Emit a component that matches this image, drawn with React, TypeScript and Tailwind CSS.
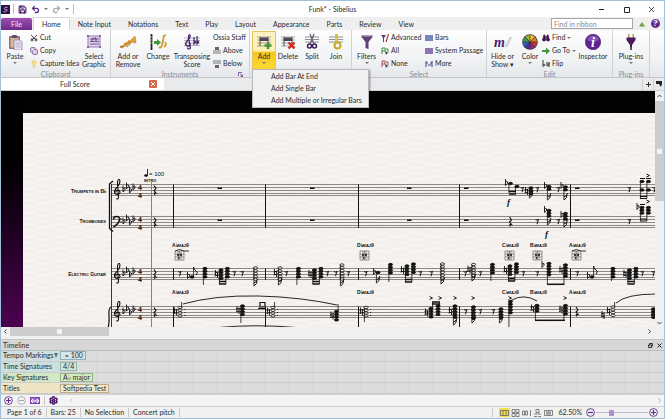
import React from 'react';
import {
  Scissors, Copy, Lightbulb, Save, Undo2, Redo2, Binoculars, Settings,
} from 'lucide-react';

const tabs = ['Home', 'Note Input', 'Notations', 'Text', 'Play', 'Layout', 'Appearance', 'Parts', 'Review', 'View'];

const Caret = () => (
  <svg className="w-1 h-1 shrink-0" viewBox="0 0 4 4"><path d="M0 1h4L2 3z" fill="#777" /></svg>
);

/* ---------- ribbon pieces ---------- */

interface BigProps {
  label: string;
  icon: React.ReactNode;
  width: string;
  menu?: boolean;
  active?: boolean;
}

const BigButton: React.FC<BigProps> = ({ label, icon, width, menu, active }) => (
  <button className={`${width} h-[39px] shrink-0 flex flex-col items-center leading-[8px] ${active ? 'border border-[#e3c35a] bg-[linear-gradient(#fdf3c4_0,#fdf0b0_52%,#f7c51a_54%,#fcd935_100%)]' : 'border border-transparent'}`}>
    <span className="h-[19px] flex items-center justify-center">{icon}</span>
    <span className="text-center pt-px">{label}</span>
    {menu && <span className="h-[6px] flex items-center"><Caret /></span>}
  </button>
);

const SmallButton: React.FC<{ label: string; icon?: React.ReactNode; menu?: boolean }> = ({ label, icon, menu }) => (
  <button className="h-[13px] flex items-center gap-[2px] whitespace-nowrap">
    {icon && <span className="w-[8px] flex justify-center">{icon}</span>}
    <span>{label}</span>
    {menu && <Caret />}
  </button>
);

const Group: React.FC<{ name: string; width: string; children: React.ReactNode; launcher?: boolean; covered?: boolean }> = ({ name, width, children, launcher, covered }) => (
  <section aria-label={name} className={`${width} shrink-0 flex flex-col border-r border-[#cfd1d5]`}>
    <div className="flex pt-px">{children}</div>
    <div className="relative h-[8px] leading-[8px] text-center text-[#8a8a8e]">
      {!covered && name}
      {launcher && (
        <svg className="absolute right-[6px] top-[2px] w-[5px] h-[5px]" viewBox="0 0 5 5" fill="none" stroke="#6b3a8c">
          <path d="M.5 4V.5H4M2 2l2.5 2.5M4.500 2.500v2H2.500" strokeWidth=".8" />
        </svg>
      )}
    </div>
  </section>
);

/* ---------- icons ---------- */

const StaffLines = ({ y = 4 }: { y?: number }) => (
  <path d={`M1 ${y}h14M1 ${y + 2.5}h14M1 ${y + 5}h14`} stroke="#777" strokeWidth=".8" />
);

const PasteIcon = () => (
  <svg className="w-4 h-4" viewBox="0 0 16 16">
    <rect x="2" y="2" width="11" height="13" rx="1" fill="#8d6f86" />
    <rect x="3.500" y="4" width="8" height="9.500" fill="#d9b98c" />
    <rect x="5" y="1" width="5" height="3" rx="1" fill="#5c4a66" />
    <path d="M7 6h6l2 2v8H7z" fill="#e9e2f1" stroke="#8a76a0" strokeWidth=".7" />
    <path d="M8.500 9h5M8.500 11h5M8.500 13h5" stroke="#a99ac0" strokeWidth=".7" />
  </svg>
);
const SelectIcon = () => (
  <svg className="w-4 h-4" viewBox="0 0 16 16" fill="none">
    <rect x="2" y="2" width="12" height="11" fill="#dccfe8" stroke="#9a7fb4" />
    <path d="M4 5h9M4 7.500h9M4 10h9" stroke="#7d5f99" />
    <path d="M6 8V5l4-1v3" stroke="#54346f" />
    <g fill="#8a6aa6"><path d="M1 1h2v2H1zM13 1h2v2h-2zM1 12h2v2H1zM13 12h2v2h-2z" /></g>
  </svg>
);
const TrumpetIcon = () => (
  <svg className="w-[18px] h-4" viewBox="0 0 18 16" fill="none">
    <path d="M2 13L12 6l4-4 1 7-4-1L3 14z" fill="#e0a03c" stroke="#b97822" strokeWidth=".6" />
    <path d="M5 9l4 4M7 8l4 3.500M9 6.500l3 3" stroke="#c58a35" strokeWidth="1.200" />
    <path d="M1 13l3-1" stroke="#a8702a" strokeWidth="1.500" />
  </svg>
);
const ChangeIcon = () => (
  <svg className="w-[18px] h-4" viewBox="0 0 18 16" fill="none">
    <path d="M2.500 0v16" stroke="#222" strokeWidth="1.800" />
    <path d="M2 3h1.500M2 6h1.500M2 9h1.500" stroke="#ccc" strokeWidth=".8" />
    <path d="M5 7h3V5l4 3.500L8 12v-2H5z" fill="#3c9a3c" />
    <path d="M15 2l-2 9q-1 4-3 2M14 2l3-1M15 13q3-2 1-5" stroke="#d39a2d" strokeWidth="1.800" />
  </svg>
);
const TransposeIcon = () => (
  <svg className="w-[18px] h-4" viewBox="0 0 18 16" fill="none">
    <path d="M1 4h16M1 6.500h16M1 9h16M1 11.500h16" stroke="#9d8fb0" strokeWidth=".7" />
    <path d="M6 15q-2 0-1-1.500M6 15Q8 15 7 12L5.500 3Q5.500 0 7 1q1 2-2 5t-2 5q2 2 4 0 1-2-1.500-2.500M11 3v7q3-3 0-3M14 2v8q3-3 0-3" stroke="#3c1f5a" strokeWidth="1.200" />
  </svg>
);
const BarIcon = ({ kind }: { kind: 'add' | 'delete' }) => (
  <svg className="w-4 h-4" viewBox="0 0 16 16" fill="none">
    <path d="M1 3h14M1 6h14M1 9h14M1 12h14" stroke="#8f8f8f" strokeWidth=".8" />
    <rect x="4" y="3.500" width="8" height="3.500" fill="#54455f" />
    <path d="M4 3v9M12 3v9" stroke="#444" />
    {kind === 'add'
      ? <path d="M12 8v7M8.500 11.500h7" stroke="#45953c" strokeWidth="2.600" />
      : <path d="M8.500 8.500l6 6M14.500 8.500l-6 6" stroke="#d02a22" strokeWidth="2.400" />}
  </svg>
);
const SplitIcon = () => (
  <svg className="w-4 h-4" viewBox="0 0 16 16" fill="none">
    <StaffLines y={3} />
    <path d="M6 0l4 10M10 0L6 10" stroke="#6b6076" strokeWidth="1.300" />
    <circle cx="5.500" cy="12" r="2" stroke="#3c1f5a" strokeWidth="1.500" />
    <circle cx="10.500" cy="12" r="2" stroke="#3c1f5a" strokeWidth="1.500" />
  </svg>
);
const JoinIcon = () => (
  <svg className="w-4 h-4" viewBox="0 0 16 16" fill="none">
    <StaffLines y={3} />
    <path d="M7 0h3v9H7z" fill="#d8c24a" />
    <circle cx="9.500" cy="11.500" r="3" stroke="#c7a92a" strokeWidth="2" />
  </svg>
);
const FunnelIcon = () => (
  <svg className="w-4 h-4" viewBox="0 0 16 16">
    <path d="M2.500 1.500h11v1.500L9.500 8v7l-3-1V8l-4-5z" fill="#5f4275" />
    <path d="M4 2.500h8" stroke="#a08bb3" strokeWidth=".8" />
  </svg>
);
const MiniFunnel = () => (
  <svg className="w-2 h-2" viewBox="0 0 8 8"><path d="M0 1h5L3 4v4H2V4z" fill="#5f4275" /><path d="M7.500 0L5 8" stroke="#b2374f" strokeWidth="1.200" /></svg>
);
const CursorIcon = ({ color }: { color: string }) => (
  <svg className="w-2 h-2" viewBox="0 0 8 8" fill="none">
    <path d="M1 7V1h3v3H1M5 2h2v3" stroke={color} strokeWidth="1" />
    <path d="M4 4l3.500 2L6 6.500 5 8z" fill="#333" />
  </svg>
);
const StripIcon = ({ color }: { color: string }) => (
  <svg className="w-2 h-2" viewBox="0 0 8 8"><path d="M0 1h8v6H0z" fill={color} opacity=".5" /><path d="M0 2h8M0 4h8M0 6h8" stroke={color} /></svg>
);
const MoreIcon = () => (
  <svg className="w-2 h-2" viewBox="0 0 8 8" fill="none" stroke="#3f3f88"><path d="M1 1v6M3 5h3M7 1v6M1 3h2M5 3h2" /></svg>
);
const StaffIcon = ({ up }: { up?: boolean }) => (
  <svg className="w-2 h-2" viewBox="0 0 8 8"><path d={up ? 'M2 0h4v3H2z' : 'M2 5h4v3H2z'} fill="#666" /><path d={up ? 'M0 4h8M0 6h8' : 'M0 1h8M0 3h8'} stroke="#777" /></svg>
);
const HideIcon = () => (
  <svg className="w-[18px] h-4" viewBox="0 0 18 16" fill="none">
    <text x="0" y="13" fontFamily="Liberation Serif, serif" fontSize="14" fontStyle="italic" fontWeight="bold" fill="#4b1c6b">m</text>
    <path d="M11 12l5-9q2 0 1 2l-4 8z" fill="#dcd8e2" stroke="#bbb" strokeWidth=".5" />
  </svg>
);
const WheelIcon = () => {
  const colors = ['#e5c321', '#e07b1e', '#c43a2b', '#8b2d7c', '#45349a', '#2f62b8', '#3d9a52', '#9cb72c'];
  return (
    <svg className="w-4 h-4" viewBox="-8 -8 16 16">
      <circle r="7.800" fill="#4a3a52" />
      {colors.map((c, i) => (
        <path key={c} d="M0 0L-2.700 -6.500A7 7 0 0 1 2.700 -6.500z" fill={c} transform={`rotate(${i * 45 + 22})`} />
      ))}
      <path d="M0-7V7M-7 0H7M-5-5L5 5M-5 5L5-5" stroke="#33243a" strokeWidth=".6" />
    </svg>
  );
};
const RoundIcon = ({ glyph, className }: { glyph: string; className: string }) => (
  <svg className={className} viewBox="0 0 16 16">
    <circle cx="8" cy="8" r="7.700" fill="#5d2390" stroke="#3e1466" strokeWidth=".6" />
    <path d="M2 6a6.300 6.300 0 0 1 12 0q-6 3-12 0z" fill="#a276c8" opacity=".6" />
    <text x="8" y="13" textAnchor="middle" fontFamily="Liberation Serif, serif" fontSize="14" fontStyle="italic" fontWeight="bold" fill="#fff">{glyph}</text>
  </svg>
);
const PlugIcon = () => (
  <svg className="w-4 h-4" viewBox="0 0 16 16">
    <path d="M5 0h1.500v4H5zM9.500 0H11v4H9.500z" fill="#b59a58" />
    <path d="M3.500 3.500h9V6L9 11v2H7v-2L3.500 6z" fill="#4a1b5f" />
    <path d="M8 12v4" stroke="#222" strokeWidth="1.500" />
  </svg>
);
const GoIcon = () => (
  <svg className="w-2 h-2" viewBox="0 0 8 8"><path d="M0 3h4V0.500l4 3.500-4 3.500V5H0z" fill="#3c9a3c" /></svg>
);
const FlipIcon = () => (
  <svg className="w-2 h-2" viewBox="0 0 8 8" fill="none" stroke="#333"><path d="M1 0v7M1 5q2-2 2 1M5 2v4q2 0 2-3M7 2v5" /></svg>
);

/* ---------- music ---------- */

const SP = 2.8;

const Staff = ({ y }: { y: number }) => (
  <path d={[0, 3, 6, 9, 11].map((dy) => `M111 ${y + dy}H655`).join('')} stroke="#8d8986" shapeRendering="crispEdges" />
);

const Flat = ({ x, y }: { x: number; y: number }) => (
  <path d={`M${x} ${y - 5}v6.500q3-2.500 2-3.800q-1-.8-2 .6`} fill="none" stroke="#111" strokeWidth=".9" />
);

const Natural = ({ x, y }: { x: number; y: number }) => (
  <path d={`M${x - 1} ${y - 4}v6M${x + 1} ${y - 2}v6M${x - 2} ${y - 1}l4-1M${x - 2} ${y + 2}l4-1`} stroke="#111" strokeWidth=".9" />
);

const Treble = ({ y }: { y: number }) => (
  <path d={`M116.500 ${y + 14}q1.500 1.500 2-1l-1-14q0-4 1.500-4t.5 4q-1 2.500-3.500 5t-1 5q3 2 5-.5 0-3.500-2.500-2.800t-1 2`} fill="none" stroke="#111" strokeWidth="1.100" />
);

const QuarterRest = ({ x, y }: { x: number; y: number }) => (
  <path d={`M${x - 1} ${y - 4}l2 3-2 2 2 2.500q-3-1-1 2`} fill="none" stroke="#111" strokeWidth="1.100" />
);

const EighthRest = ({ x, y }: { x: number; y: number }) => (
  <path d={`M${x - 1.500} ${y - 1.500}q1.500 1.500 3-.3l-1.500 5`} fill="none" stroke="#111" strokeWidth="1" />
);

const Signature = ({ y, bass }: { y: number; bass?: boolean }) => (
  <g>
    {bass
      ? <path d={`M113.500 ${y + 3}q0-3 3-3 3.500 0 3 3.500-1 4-6 7M121 ${y + 2}v1M121 ${y + 5}v1`} fill="none" stroke="#111" strokeWidth="1.500" />
      : <Treble y={y} />}
    <Flat x={123} y={y + 6} />
    <Flat x={126.500} y={y + 3} />
    <Flat x={129.500} y={y + 7} />
    <Flat x={133} y={y + 4} />
    <text x="138" y={y + 5} fontSize="7" fontWeight="bold">4</text>
    <text x="138" y={y + 13} fontSize="7" fontWeight="bold">4</text>
    <QuarterRest x={155} y={y + 5} />
  </g>
);

interface ChordProps {
  x: number;
  y: number;
  n: number;
  to?: number;
  open?: boolean;
  flag?: boolean;
  acc?: boolean;
}

const Chord: React.FC<ChordProps> = ({ x, y, n, to, open, flag, acc }) => {
  const heads = Array.from({ length: n }, (_, i) => y + i * SP);
  const sx = to !== undefined && to < y ? x + 1.600 : x - 1.600;
  return (
    <g>
      {heads.map((hy) => (
        <ellipse key={hy} cx={x} cy={hy} rx="2.100" ry="1.200" fill={open ? '#f5f2ef' : '#111'} stroke="#111" strokeWidth=".8" />
      ))}
      {to !== undefined && <path d={`M${sx} ${y}V${to}`} stroke="#111" strokeWidth=".8" />}
      {flag && to !== undefined && to > y && <path d={`M${sx} ${to}q3.500-2 3-5M${sx} ${to - 3}q3.500-1 3.500-4`} fill="none" stroke="#111" strokeWidth="1" />}
      {flag && to !== undefined && to < y && <path d={`M${sx} ${to}q0 2.500 2.500 4t0 4`} fill="none" stroke="#111" strokeWidth="1" />}
      {acc && <Natural x={x - 4.500} y={y + n} />}
    </g>
  );
};

const Pair = ({ x, y, n, to, y2 = y }: { x: number; y: number; n: number; to: number; y2?: number }) => (
  <g>
    <Chord x={x} y={y} n={n} to={to} acc />
    <Chord x={x + 6.500} y={y2} n={n} to={to} />
    <path d={`M${x - 2} ${to}h7M${x - 2} ${to - 2.500}h7`} stroke="#111" strokeWidth="1.300" />
  </g>
);

const Diagram = ({ x, y, arc }: { x: number; y: number; arc?: boolean }) => (
  <g fill="none" stroke="#555" strokeWidth=".6">
    <path d={`M${x} ${y}h9v9h-9zM${x} ${y + 3}h9M${x} ${y + 6}h9M${x + 3} ${y}v9M${x + 6} ${y}v9M${x + 4.500} ${y}v9`} />
    {arc && <path d={`M${x} ${y}q4.500-3 9 0h5`} stroke="#222" strokeWidth=".9" />}
    <path d={`M${x + 2} ${y + 4}h2M${x + 5} ${y + 4}h2M${x + 3} ${y + 7}h1`} stroke="#111" strokeWidth="1.300" />
  </g>
);

const bars = [173.500, 265.500, 358.500, 459.500, 570.500];
const symbols: [number, string][] = [[172, 'A♭maj9'], [357, 'D♭maj9'], [502, 'C♭maj9'], [530, 'B♭maj9'], [569, 'A♭maj9']];
const guitarRests = [179.500, 234, 242, 286, 327, 335.500, 348, 365.500, 420, 431, 465, 480, 523, 537, 577, 642, 653];
const hornRests: [number, number][] = [[522, 189], [537, 189], [558, 189], [629, 189], [654, 189], [537, 221], [558, 221], [629, 221]];

const Score = () => (
  <svg className="absolute inset-0 w-full h-full" role="img" aria-label="Full Score" fill="#111" fontFamily="Liberation Sans, sans-serif">
    <defs>
      <linearGradient id="desk" x1="0" y1="0" x2="0" y2="1">
        <stop offset=".3" stopColor="#000" />
        <stop offset=".6" stopColor="#1f0022" />
        <stop offset="1" stopColor="#4c0350" />
      </linearGradient>
      <pattern id="paper" width="34" height="12" patternUnits="userSpaceOnUse">
        <rect width="34" height="12" fill="#f5f1ee" />
        <path d="M0 1.500h14M20 4.500h14M4 7.500h18M16 10.500h12" stroke="#f1edea" />
        <path d="M16 1.500h12M2 4.500h12M24 7.500h9M0 10.500h11" stroke="#f8f5f2" />
      </pattern>
    </defs>
    <rect width="100%" height="100%" fill="#020202" />
    <rect width="22" height="100%" fill="url(#desk)" />
    <rect x="22" y="22" width="100%" height="100%" fill="url(#paper)" />
    <g transform="translate(-1 -91)">
      <Staff y={184.500} />
      <Staff y={216.500} />
      <Staff y={268.500} />
      <Staff y={306.500} />
      <path d="M151.500 182V330" stroke="#5f9a68" shapeRendering="crispEdges" />
      <path d="M111.500 184V330" stroke="#222" strokeWidth=".9" />
      <path d="M113 181l-3.500 3v44.500l3.500 3" fill="none" stroke="#111" strokeWidth="1.300" />
      <path d="M111 307q-2.500 1-2 9t-1.500 14" fill="none" stroke="#111" strokeWidth="1.200" />
      {bars.map((x) => (
        <path key={x} d={`M${x} 184.500V227.700M${x} 268.500v11.200M${x} 306.500V330`} stroke="#111" />
      ))}
      <Signature y={184.500} />
      <Signature y={216.500} bass />
      <Signature y={268.500} />
      <Signature y={306.500} />

      <g fontSize="5" fontWeight="bold">
        <g textAnchor="end" style={{ fontVariant: 'small-caps' }}>
          <text x="106" y="193">Trumpets in B♭</text>
          <text x="106" y="223">Trombones</text>
          <text x="106" y="276">Electric Guitar</text>
        </g>
        <text x="144" y="182" fontSize="4">INTRO</text>
        <text x="149" y="176" fontSize="6" fontWeight="normal">= 100</text>
      </g>
      <ellipse cx="146" cy="175.500" rx="1.800" ry="1.300" />
      <path d="M147.500 175.500V169" stroke="#111" strokeWidth=".9" />

      {[219.500, 312, 409, 466, 577].map((x) => (
        <path key={x} d={`M${x - 2} 188.300h4.500M${x - 2} 220.300h4.500`} stroke="#111" strokeWidth="1.500" />
      ))}

      {/* brass entries */}
      <Flat x={505.500} y={184} />
      <Chord x={510.500} y={183.500} n={1} to={193} />
      <Chord x={517} y={186.500} n={1} to={193} />
      <path d="M509 194h7M509 191.500h7" stroke="#111" strokeWidth="1.300" />
      <Chord x={531} y={188} n={3} to={198} flag acc />
      <Chord x={549} y={186.500} n={2} to={200} flag />
      <Flat x={544.500} y={187} />
      <Chord x={565.500} y={187} n={2} to={200} flag />
      <Flat x={561} y={187} />
      <QuarterRest x={510.500} y={221} />
      <Chord x={549} y={210.500} n={3} to={225} flag />
      <Flat x={544.500} y={211} />
      <Chord x={565.500} y={213.500} n={3} to={227} flag />
      <Flat x={561} y={216} />
      <Chord x={642} y={181.500} n={1} to={198} />
      <Chord x={642} y={190} n={1} />
      <Chord x={648.500} y={181.500} n={1} to={198} />
      <Chord x={648.500} y={190} n={1} />
      <path d="M640 198.500h7M640 196.500h7M640 178.500h5M646 178.500h5M646.500 174l3 1.500-3 1.500" fill="none" stroke="#111" />
      <Chord x={642} y={207.500} n={3} to={221} />
      <Chord x={648.500} y={207.500} n={3} to={221} />
      <Flat x={637} y={208} />
      <path d="M640 221h7M640 219h7M640 204.500h5M646.500 200l3 1.500-3 1.500" fill="none" stroke="#111" />
      {hornRests.map(([x, y]) => <EighthRest key={`${x}-${y}`} x={x} y={y} />)}
      <g fontFamily="Liberation Serif, serif" fontStyle="italic" fontWeight="bold" fontSize="9">
        <text x="507" y="205">f</text>
        <text x="545" y="237">f</text>
      </g>

      {symbols.map(([x, name], i) => (
        <g key={x} fontSize="5" fontWeight="bold" style={{ fontVariant: 'small-caps' }}>
          <text x={x} y="246.500">{name}</text>
          <text x={x} y="293.500">{name}</text>
          <Diagram x={x + 3} y={251} arc={i === 0 || i === 4} />
        </g>
      ))}

      {/* guitar */}
      {guitarRests.map((x) => <EighthRest key={x} x={x} y={273} />)}
      <Flat x={187.500} y={277} />
      <Chord x={192} y={277} n={1} to={267} flag />
      <Chord x={205} y={268.500} n={4} to={285} />
      <Pair x={221} y={270} y2={268.500} n={4} to={284} />
      <Chord x={255.500} y={268} n={5} to={286} open flag />
      <Chord x={280} y={268} n={5} to={285} open flag acc />
      <Chord x={298.500} y={268.500} n={4} to={285} />
      <Pair x={314.500} y={270} y2={268.500} n={4} to={284} />
      <Chord x={342} y={265} n={6} to={286} open flag />
      <Flat x={373.500} y={273} />
      <Chord x={378} y={272.500} n={1} to={283} flag />
      <Chord x={390.500} y={264.500} n={4} to={282} />
      <Pair x={407} y={266} y2={264} n={4} to={282} />
      <Chord x={442.500} y={264} n={6} to={284} open flag />
      <Chord x={473.500} y={264.500} n={5} to={281} open flag acc />
      <Chord x={492.500} y={264.500} n={4} to={281} />
      <Pair x={510} y={266} y2={264} n={4} to={281} />
      <Flat x={542} y={266} />
      <Chord x={549} y={263.500} n={5} to={284} />
      <Chord x={565.500} y={265} n={5} to={284} acc />
      <path d="M547 284.300h17.500" stroke="#111" strokeWidth="1.500" />
      <Flat x={587.500} y={277} />
      <Chord x={592} y={277} n={1} to={266} flag />
      <Chord x={613} y={268.500} n={4} to={281} />
      <Pair x={629.500} y={270} y2={268.500} n={4} to={284} />

      {/* keyboard */}
      <Chord x={180} y={307.500} n={4} to={302} open acc />
      <Chord x={242.500} y={306} n={4} to={323} acc />
      <path d="M258 308.500h8M260 306v-3.500h5V306M259 307h7" fill="none" stroke="#111" strokeWidth="1.200" />
      <Chord x={273} y={307.500} n={4} to={302} open acc />
      <Chord x={336.500} y={311.500} n={4} to={304} acc />
      <Chord x={366} y={307.500} n={4} to={322} open acc />
      <path d="M185 309v1M185 312v1M185 315v1M277.500 309v1M277.500 312v1M277.500 315v1M370.500 309v1M370.500 312v1M370.500 315v1" stroke="#111" />
      <path d="M183 304Q215 295 258 296T337 305M219 327.500Q255 324 296 327.500M511 300.500Q524 293 537 301M616 303Q626 294 656 294" fill="none" stroke="#111" strokeWidth=".9" />
      <Chord x={431} y={308.500} n={4} to={302} acc />
      <Chord x={438} y={306} n={4} to={302} />
      <path d="M432 302h8M432 304h8" stroke="#111" strokeWidth="1.300" />
      <Chord x={455} y={306} n={5} to={325} acc flag />
      <Chord x={473.500} y={307} n={5} to={323} flag />
      <Chord x={501} y={309} n={4} to={323} flag />
      <Chord x={510.500} y={301.500} n={5} to={328} />
      <Chord x={537} y={305.500} n={3} to={320} acc />
      <Chord x={565.500} y={305.500} n={4} to={320} acc />
      <path d="M535 320.300h30" stroke="#111" strokeWidth="1.500" />
      {[431, 440, 455, 473, 510, 565].map((x) => (
        <path key={x} d={`M${x - 1.500} 296.500l3 1.500-3 1.500`} fill="none" stroke="#111" strokeWidth=".9" />
      ))}
      <EighthRest x={465.500} y={311} />
      <EighthRest x={480} y={311} />
      <EighthRest x={493} y={311} />
      <QuarterRest x={577} y={311} />
      <Chord x={613} y={307} n={4} to={302} open acc />
      <Natural x={603} y={315} />
      <Chord x={653.500} y={309} n={4} to={318} />
    </g>
  </svg>
);

/* ---------- timeline ---------- */

const timeline = [
  { name: 'Tempo Markings', value: '♩ = 100', head: 'bg-[#cddfe3]', cell: 'bg-[#d3e5e8] border-[#8fb0b6]' },
  { name: 'Time Signatures', value: '4/4', head: 'bg-[#cce1df]', cell: 'bg-[#cfe6e2] border-[#8fb5ae]' },
  { name: 'Key Signatures', value: 'A♭ major', head: 'bg-[#d2e8c4]', cell: 'bg-[#d3eac6] border-[#94b583]' },
  { name: 'Titles', value: 'Softpedia Test', head: 'bg-[#efe4c5]', cell: 'bg-[#f3ead2] border-[#bfae84]' },
];

const ViewIcon = ({ d, on }: { d: string; on?: boolean }) => (
  <button aria-label="View mode" className={`w-[11px] h-[9px] flex items-center justify-center ${on ? 'bg-[#f5dc4e]' : ''}`}>
    <svg className="w-[9px] h-[8px]" viewBox="0 0 9 8" fill="none" stroke="#666" strokeWidth=".8"><path d={d} /></svg>
  </button>
);

const Sep = () => <span className="w-px h-[9px] bg-[#c9c9c9]" />;

const CircleButton = ({ plus, color }: { plus?: boolean; color: string }) => (
  <button aria-label={plus ? 'Increase' : 'Decrease'}>
    <svg className="w-[9px] h-[9px]" viewBox="0 0 9 9" fill="none" stroke={color}>
      <circle cx="4.500" cy="4.500" r="3.900" strokeWidth=".9" />
      <path d={plus ? 'M2 4.500h5M4.500 2v5' : 'M2 4.500h5'} strokeWidth="1.200" />
    </svg>
  </button>
);

const App: React.FC = () => (
  <div className="h-screen flex flex-col overflow-hidden bg-[#f0f0f0] border border-[#9fc0d8] text-[7px] leading-[9px] text-[#2b2b2b] font-['Lato',sans-serif]">
    {/* title bar */}
    <header className="relative h-[16px] shrink-0 flex items-center bg-white">
      <svg className="w-[9px] h-[9px]" viewBox="0 0 9 9"><rect width="9" height="9" fill="#2c1240" /><path d="M6.500 2.500q-3-1-3 .8t2 1.500-1 2.200l-2-.5" fill="none" stroke="#c9a8e6" /></svg>
      <span className="w-px h-[10px] ml-[3px] bg-[#bbb]" />
      <button aria-label="Save" className="ml-1"><Save className="w-[9px] h-[9px]" color="#4b1c6b" strokeWidth={3} /></button>
      <button aria-label="Undo" className="ml-1"><Undo2 className="w-[9px] h-[9px]" color="#5c2f86" strokeWidth={3.500} /></button>
      <span className="ml-1"><Caret /></span>
      <button aria-label="Redo" className="ml-1"><Redo2 className="w-[9px] h-[9px]" color="#a9a9ad" strokeWidth={3.500} /></button>
      <span className="ml-1"><Caret /></span>
      <span className="w-px h-[10px] ml-1 bg-[#bbb]" />
      <h1 className="absolute inset-x-0 text-center pointer-events-none">Funk* - Sibelius</h1>
      <div className="ml-auto mr-[9px] flex gap-[18px]">
        <button aria-label="Minimize"><svg className="w-[7px] h-[7px]" viewBox="0 0 7 7"><path d="M1 3.500h5" stroke="#222" /></svg></button>
        <button aria-label="Maximize"><svg className="w-[7px] h-[7px]" viewBox="0 0 7 7"><path d="M1.500 1.500h5v5h-5z" fill="none" stroke="#222" /></svg></button>
        <button aria-label="Close"><svg className="w-[7px] h-[7px]" viewBox="0 0 7 7"><path d="M1 1l5 5M6 1L1 6" stroke="#222" strokeWidth=".8" /></svg></button>
      </div>
    </header>

    {/* ribbon tabs */}
    <nav className="h-[13px] shrink-0 flex items-end bg-[#efeff0]">
      <button className="w-[31px] h-[12px] rounded-t-[2px] bg-[linear-gradient(#a04fb5,#6c2a86)] text-[#f3e6fa]">File</button>
      <div className="flex gap-px ml-[2px]">
        {tabs.map((t) => (
          <button key={t} className={`h-[12px] px-2 whitespace-nowrap ${t === 'Home' ? 'bg-white shadow-[0_0_0_1px_#d5d6d9]' : ''}`}>{t}</button>
        ))}
      </div>
      <div className="ml-auto mr-1 h-[13px] flex items-center gap-[6px]">
        <input aria-label="Find in ribbon" placeholder="Find in ribbon" className="w-[82px] h-[11px] px-[2px] bg-white border border-[#a5a5a8] placeholder:text-[#8a8a8a]" />
        <svg className="w-[6px] h-[6px]" viewBox="0 0 6 6"><path d="M3 1l3 4.500H0z" fill="#6ba23c" /></svg>
        <RoundIcon glyph="?" className="w-[9px] h-[9px]" />
      </div>
    </nav>

    {/* ribbon */}
    <div className="relative h-[48px] shrink-0 flex bg-[linear-gradient(#fdfdfd,#f2f3f5_60%,#e6e7ea)] border-b border-[#c5c7cb]">
      <Group name="Clipboard" width="w-[110px]">
        <BigButton width="w-[28px]" label="Paste" menu icon={<PasteIcon />} />
        <div className="w-[49px] pl-px">
          <SmallButton label="Cut" icon={<Scissors className="w-2 h-2 -rotate-90" color="#444" strokeWidth={3} />} />
          <SmallButton label="Copy" icon={<Copy className="w-2 h-2" color="#7d5c9c" fill="#e4d9ee" strokeWidth={3} />} />
          <SmallButton label="Capture Idea" icon={<Lightbulb className="w-2 h-2" color="#e0b440" fill="#fbe48a" strokeWidth={2} />} />
        </div>
        <BigButton width="w-[32px]" label="Select Graphic" icon={<SelectIcon />} />
      </Group>
      <Group name="Instruments" width="w-[139px]" launcher>
        <BigButton width="w-[34px]" label="Add or Remove" icon={<TrumpetIcon />} />
        <BigButton width="w-[26px]" label="Change" icon={<ChangeIcon />} />
        <BigButton width="w-[42px]" label="Transposing Score" icon={<TransposeIcon />} />
        <div>
          <SmallButton label="Ossia Staff" />
          <SmallButton label="Above" icon={<StaffIcon up />} />
          <SmallButton label="Below" icon={<StaffIcon />} />
        </div>
      </Group>
      <Group name="Bars" width="w-[102px]" covered>
        <div className="relative flex pl-[2px]">
          <BigButton width="w-[24px]" label="Add" menu active icon={<BarIcon kind="add" />} />
          <BigButton width="w-[24px]" label="Delete" icon={<BarIcon kind="delete" />} />
          <BigButton width="w-[24px]" label="Split" icon={<SplitIcon />} />
          <BigButton width="w-[24px]" label="Join" icon={<JoinIcon />} />
          <ul role="menu" className="absolute left-[2px] top-[38px] z-10 w-[117px] pb-px bg-[#f1f1f2] border border-[#b9b9bb] shadow-[1px_1px_2px_rgba(0,0,0,.4)]">
            {['Add Bar At End', 'Add Single Bar', 'Add Multiple or Irregular Bars'].map((m) => (
              <li key={m}><button role="menuitem" className="h-[12px] pl-[18px] block whitespace-nowrap">{m}</button></li>
            ))}
          </ul>
        </div>
      </Group>
      <Group name="Select" width="w-[135px]">
        <BigButton width="w-[29px]" label="Filters" menu icon={<FunnelIcon />} />
        <div className="w-[44px]">
          <SmallButton label="Advanced" icon={<MiniFunnel />} />
          <SmallButton label="All" icon={<CursorIcon color="#3a8a3a" />} />
          <SmallButton label="None" icon={<CursorIcon color="#a34a5a" />} />
        </div>
        <div>
          <SmallButton label="Bars" icon={<StripIcon color="#4a62a8" />} />
          <SmallButton label="System Passage" icon={<StripIcon color="#6a4a98" />} />
          <SmallButton label="More" icon={<MoreIcon />} />
        </div>
      </Group>
      <Group name="Edit" width="w-[126px]">
        <BigButton width="w-[31px]" label="Hide or Show ▾" icon={<HideIcon />} />
        <BigButton width="w-[24px]" label="Color" menu icon={<WheelIcon />} />
        <div className="w-[34px]">
          <SmallButton label="Find" menu icon={<Binoculars className="w-2 h-2" color="#3c1552" fill="#3c1552" strokeWidth={2} />} />
          <SmallButton label="Go To" menu icon={<GoIcon />} />
          <SmallButton label="Flip" icon={<FlipIcon />} />
        </div>
        <BigButton width="w-[34px]" label="Inspector" icon={<RoundIcon glyph="i" className="w-4 h-4" />} />
      </Group>
      <Group name="Plug-ins" width="w-[37px]">
        <BigButton width="w-[36px]" label="Plug-ins" menu icon={<PlugIcon />} />
      </Group>
    </div>

    {/* document tabs */}
    <div className="h-[13px] shrink-0 flex items-center bg-[#e9eaec] border-b border-[#c9d3d9]">
      <div className="w-[163px] h-[12px] flex items-center bg-white">
        <span className="flex-1 text-center">Full Score</span>
        <button aria-label="Close tab" className="w-[8px] h-[8px] mr-[7px] rounded-[1px] bg-[#d8694f] flex items-center justify-center">
          <svg className="w-1 h-1" viewBox="0 0 4 4"><path d="M0 0l4 4M4 0L0 4" stroke="#fff" /></svg>
        </button>
      </div>
      <button aria-label="New tab" className="ml-auto w-[11px] h-[11px] flex items-center justify-center border-l border-[#cfcfd2]">
        <svg className="w-[5px] h-[5px]" viewBox="0 0 5 5"><path d="M0 2.500h5M2.500 0v5" stroke="#333" /></svg>
      </button>
      <button aria-label="Tab list" className="w-[11px] h-[11px] flex items-center justify-center border-l border-[#cfcfd2]">
        <svg className="w-[6px] h-[6px]" viewBox="0 0 6 6"><path d="M0 0h6v3H0zM3 3h3L5 6z" fill="#222" /></svg>
      </button>
    </div>

    {/* score */}
    <main className="flex-1 min-h-0 flex">
      <div className="relative flex-1 overflow-hidden"><Score /></div>
      <div className="w-[9px] shrink-0 flex flex-col items-center justify-between bg-[#f0f0f0]">
        <div className="w-full flex flex-col items-center">
          <svg className="w-[5px] h-[10px]" viewBox="0 0 5 10"><path d="M.5 6l2-2 2 2" fill="none" stroke="#444" /></svg>
          <div className="w-full h-[100px] flex items-center justify-center bg-[#cdcdcd]"><span className="w-[5px] h-[5px] bg-[#f4f4f4]" /></div>
        </div>
        <svg className="w-[5px] h-[8px]" viewBox="0 0 5 8"><path d="M.5 3l2 2 2-2" fill="none" stroke="#444" /></svg>
      </div>
    </main>
    <div className="h-[9px] shrink-0 flex items-center bg-[#f0f0f0] pr-[10px]">
      <svg className="w-[9px] h-[5px]" viewBox="0 0 9 5"><path d="M5.500 .5l-2 2 2 2" fill="none" stroke="#444" /></svg>
      <div className="w-[99px] h-full flex items-center justify-center bg-[#cdcdcd]"><span className="w-[5px] h-[5px] bg-[#f4f4f4]" /></div>
      <svg className="ml-auto w-[9px] h-[5px]" viewBox="0 0 9 5"><path d="M3.500 .5l2 2-2 2" fill="none" stroke="#444" /></svg>
    </div>
    <div className="h-[4px] shrink-0 border-b border-[#c4c4c4]" />

    {/* timeline */}
    <section aria-label="Timeline" className="shrink-0">
      <div className="h-[11px] px-[2px] flex items-center bg-[#d7d7d7] border-b border-[#bdbdbd]">
        <h2>Timeline</h2>
        <div className="ml-auto flex gap-1">
          <button aria-label="Float"><svg className="w-[5px] h-[5px]" viewBox="0 0 5 5" fill="none" stroke="#222"><path d="M1.500 2V.5h3v2.500H4M.5 2h3v2.500h-3z" strokeWidth=".9" /></svg></button>
          <button aria-label="Close timeline"><svg className="w-[5px] h-[5px]" viewBox="0 0 5 5"><path d="M.5 .5l4 4M4.500 .5l-4 4" stroke="#222" /></svg></button>
        </div>
      </div>
      <div className="h-[43px] grid grid-rows-4 overflow-hidden bg-[repeating-linear-gradient(90deg,#dcdcdc_0,#dcdcdc_23px,#d6d6d6_23px,#d6d6d6_24px)]">
        {timeline.map((r, i) => (
          <div key={r.name} className="flex items-center border-b border-[#cbcbcb]">
            <div className={`w-[59px] h-full px-[2px] flex items-center justify-between whitespace-nowrap ${r.head}`}>
              {r.name}
              {i === 0 && <svg className="w-1 h-[5px] shrink-0" viewBox="0 0 4 5"><path d="M0 0h4L2 5z" fill="#55757d" /></svg>}
            </div>
            <span className={`h-[9px] px-[2px] border leading-[7px] whitespace-nowrap ${r.cell}`}>{r.value}</span>
          </div>
        ))}
      </div>
      <div className="h-[12px] px-[3px] flex items-center gap-1 bg-[#f4f4f4] border-t border-[#d0d0d0]">
        <CircleButton plus color="#5c2f86" />
        <CircleButton color="#a9a9ad" />
        <button aria-label="Fit" className="w-[10px] h-[7px] flex items-center justify-center bg-[#a46ad2] border border-[#7b3fb0]">
          <svg className="w-2 h-1" viewBox="0 0 8 4"><path d="M0 2h8M2 0L0 2l2 2M6 0l2 2-2 2" fill="none" stroke="#fff" /></svg>
        </button>
        <Sep />
        <button aria-label="Settings"><Settings className="w-[9px] h-[9px]" color="#4b1c6b" strokeWidth={4} /></button>
        <svg className="ml-2 w-[3px] h-[5px]" viewBox="0 0 3 5"><path d="M2.500 .5l-2 2 2 2" fill="none" stroke="#c4c4c4" /></svg>
        <svg className="ml-auto w-[3px] h-[5px]" viewBox="0 0 3 5"><path d="M.5 .5l2 2-2 2" fill="none" stroke="#a8a8a8" /></svg>
      </div>
    </section>

    {/* status bar */}
    <footer className="h-[12px] shrink-0 px-[6px] flex items-center bg-[#f1f1f1] border-t border-[#cfcfcf]">
      <div className="flex items-center gap-1">
        <span>Page 1 of 6</span><Sep />
        <span>Bars: 25</span><Sep />
        <span>No Selection</span><Sep />
        <span>Concert pitch</span><Sep />
      </div>
      <div className="ml-auto flex items-center">
        <Sep />
        <div className="flex ml-[6px]">
          <ViewIcon on d="M.5 1.500h8v5h-8zM3 1.500v5M6 1.500v5" />
          <ViewIcon d="M1 .5h3v3H1zM5 .5h3v3H5zM1 4.500h3v3H1zM5 4.500h3v3H5z" />
          <ViewIcon d="M.5 2h2v4h-2zM3.500 2h2v4h-2zM8.500 1v6" />
          <ViewIcon d="M3 .5h3v3H3zM1 5h7M1 7.500h3M5 7.500h3" />
          <ViewIcon d="M.5 1.500h8v5h-8zM2 3h5M2 4h5M2 5h5" />
        </div>
        <span className="mx-1">62.50%</span>
        <CircleButton color="#5c2f86" />
        <input
          type="range"
          aria-label="Zoom"
          defaultValue={27}
          className="w-[52px] h-[9px] mx-px appearance-none bg-[linear-gradient(#c2b8cb,#c2b8cb)] bg-[length:100%_1px] bg-center bg-no-repeat [&::-webkit-slider-thumb]:appearance-none [&::-webkit-slider-thumb]:w-[5px] [&::-webkit-slider-thumb]:h-[6px] [&::-webkit-slider-thumb]:rounded-[1px] [&::-webkit-slider-thumb]:bg-[#b18fce]"
        />
        <CircleButton plus color="#5c2f86" />
      </div>
    </footer>
  </div>
);

export default App;
